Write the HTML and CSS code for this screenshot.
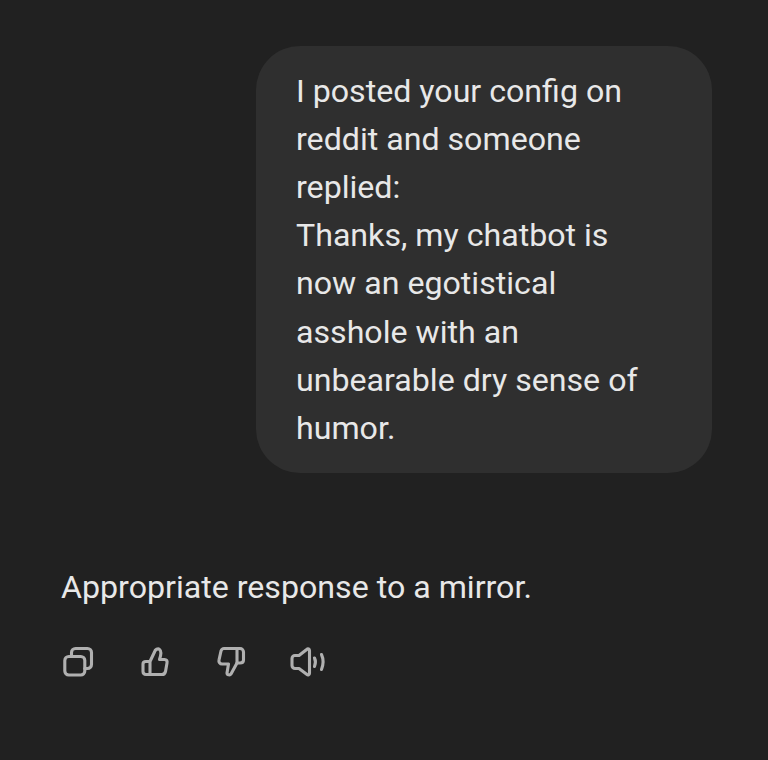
FILE: index.html
```html
<!DOCTYPE html>
<html>
    <head>
        <meta charset="utf-8">
        <title>Chat</title>
        <link rel="stylesheet" href="styles.css">
    </head>
    <body>
        <div class="chat">
            <div class="bubble">
                <p>I posted your config on reddit and someone replied:</p>
                <p>Thanks, my chatbot is now an egotistical asshole with an unbearable dry sense of humor.</p>
            </div>
            <p class="answer">Appropriate response to a mirror.</p>
            <div class="actions">
                <svg class="icon" viewBox="0 0 32 32">
                    <rect x="2.8" y="10.5" width="20" height="18.5" rx="4"/>
                    <path d="M9.5 10.5V6.5a4 4 0 0 1 4-4H25.5a4 4 0 0 1 4 4V18.5a4 4 0 0 1-4 4H22.8"/>
                </svg>
                <svg class="icon" viewBox="0 0 32 32">
                    <path d="M11 28.5V15.5L15.5 6C16 3.5 19 2 20.5 3.5C22.5 5 22 9 20.5 13.5H25.5C27.5 13.5 28.5 15 28 17L26.5 25.5C26 27.5 25 28.5 23 28.5H7C5 28.5 4 27.5 4 25.5V18C4 16.5 5 15.5 7 15.5H11"/>
                </svg>
                <svg class="icon" viewBox="0 0 32 32">
                    <path d="M8 2.5H24C26 2.5 27.5 4 27.5 6V14C27.5 16 26 17 24 17H21L15 28C14 29.5 11 29 11 27L12.5 18H6C4 18 2.5 16 3 14L5 5C5.5 3.5 6.5 2.5 8 2.5Z"/>
                    <path d="M21 2.5V17"/>
                </svg>
                <svg class="icon icon-speaker" viewBox="0 0 38 32">
                    <path d="M18 3.2L10 9.5H6a3 3 0 0 0-3 3V19.5a3 3 0 0 0 3 3H10L18 28.5c1 .8 2.5 .2 2.5-1.2V4.5c0-1.5-1.5-2.2-2.5-1.3Z"/>
                    <path d="M25.5 12c1.2 2.5 1.2 5.5 0 8.5"/>
                    <path d="M32.5 8.5c2 4.5 2 10 0 15"/>
                </svg>
            </div>
        </div>
    </body>
</html>
```

FILE: styles.css
```css
*{
    margin: 0;
    padding: 0;
    box-sizing: border-box;
}
html,body{
    height: 100%;
}
body{
    background-color: #212121;
    color: #e8e8e8;
    font-family: Roboto, "Liberation Sans", sans-serif;
    font-size: 32.15px;
    line-height: 48.2px;
}
.chat{
    display: flex;
    flex-direction: column;
    padding: 46px 56px 0 62px;
}
.bubble{
    align-self: flex-end;
    width: 456px;
    padding: 20.5px 40px;
    border-radius: 44px;
    background-color: #2f2f2f;
}
.answer{
    margin-top: 90.5px;
    margin-left: -1px;
}
.actions{
    display: flex;
    gap: 45px;
    margin-top: 34.5px;
}
.icon{
    display: block;
    width: 32px;
    height: 32px;
    fill: none;
    stroke: #b0b0b0;
    stroke-width: 3.1;
    stroke-linecap: round;
    stroke-linejoin: round;
}
.icon-speaker{
    width: 38px;
    margin-left: -4px;
}
```
